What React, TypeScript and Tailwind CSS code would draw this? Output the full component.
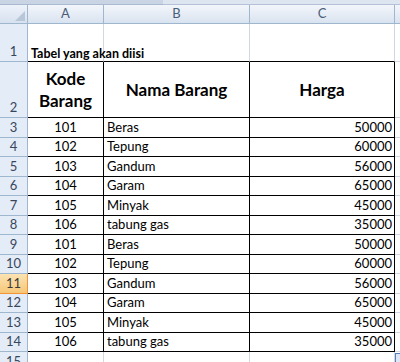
import React from "react";

const items = [
  ["101", "Beras", "50000"],
  ["102", "Tepung", "60000"],
  ["103", "Gandum", "56000"],
  ["104", "Garam", "65000"],
  ["105", "Minyak", "45000"],
  ["106", "tabung gas", "35000"],
];
const rows = [...items, ...items];

const font = { fontFamily: "Lato, 'Open Sans', sans-serif" };

function RowHead({ n, active }: { n: number; active?: boolean }) {
  return (
    <div
      className={
        "w-[28px] shrink-0 flex items-end justify-center pb-[1px] border-r border-b text-[13px] leading-none " +
        (active
          ? "bg-gradient-to-b from-[#fbe3b3] to-[#f6c777] border-r-[#f29436] border-b-[#f29436] text-[#3b3b3b]"
          : "bg-[#e4ecf7] border-r-[#9eb6ce] border-b-[#9eb6ce] text-[#37465c]")
      }
    >
      <span className="mb-[2px]">{n}</span>
    </div>
  );
}

export default function App() {
  return (
    <div className="w-[400px] h-[362px] overflow-hidden bg-white flex flex-col" style={font}>
      {/* top strip */}
      <div className="h-[5px] shrink-0 flex">
        <div className="w-[163px] bg-[#c9d5e5] border-b border-b-[#a9bad0]" />
        <div className="flex-1 bg-[#dde5f0] border-b border-b-[#b3c2d6]" />
      </div>
      {/* column header */}
      <div className="h-[19px] shrink-0 flex text-[13px] text-[#4a5c78]">
        <div className="w-[28px] shrink-0 relative bg-gradient-to-b from-[#eef3fa] to-[#d7e1ef] border-r border-b border-r-[#9eb6ce] border-b-[#9eb6ce]">
          <div className="absolute right-[2px] bottom-[2px] w-0 h-0 border-l-[10px] border-l-transparent border-b-[10px] border-b-[#b9c6d8]" />
        </div>
        <div className="w-[76px] shrink-0 flex items-center justify-center bg-gradient-to-b from-[#f3f6fb] to-[#d9e3f0] border-r border-b border-r-[#9eb6ce] border-b-[#9eb6ce]">A</div>
        <div className="w-[146px] shrink-0 flex items-center justify-center bg-gradient-to-b from-[#f3f6fb] to-[#d9e3f0] border-r border-b border-r-[#9eb6ce] border-b-[#9eb6ce]">B</div>
        <div className="w-[145px] shrink-0 flex items-center justify-center bg-gradient-to-b from-[#f3f6fb] to-[#d9e3f0] border-r border-b border-r-[#9eb6ce] border-b-[#9eb6ce]">C</div>
        <div className="flex-1 bg-gradient-to-b from-[#f3f6fb] to-[#d9e3f0] border-b border-b-[#9eb6ce]" />
      </div>
      {/* row 1 */}
      <div className="h-[38px] shrink-0 flex">
        <RowHead n={1} />
        <div className="w-[76px] shrink-0 relative border-r border-r-[#d0d7e5] border-b border-b-black">
          <span className="absolute left-[3px] bottom-[1px] whitespace-nowrap text-[12.5px] font-bold text-black leading-none">
            Tabel yang akan diisi
          </span>
        </div>
        <div className="w-[146px] shrink-0 border-r border-r-[#d0d7e5] border-b border-b-black" />
        <div className="w-[145px] shrink-0 border-r border-r-[#d0d7e5] border-b border-b-black" />
        <div className="flex-1 border-b border-b-[#d0d7e5]" />
      </div>
      {/* row 2 */}
      <div className="h-[56px] shrink-0 flex">
        <RowHead n={2} />
        <div className="w-[76px] shrink-0 flex flex-col items-center justify-center border-r border-b border-black text-[17px] font-bold leading-[22px] text-black">
          <span>Kode</span>
          <span>Barang</span>
        </div>
        <div className="w-[146px] shrink-0 flex items-center justify-center border-r border-b border-black text-[17px] font-bold text-black">
          Nama Barang
        </div>
        <div className="w-[145px] shrink-0 flex items-center justify-center border-r border-b border-black text-[17px] font-bold text-black">
          Harga
        </div>
        <div className="flex-1 border-b border-b-[#d0d7e5]" />
      </div>
      {/* data rows */}
      {rows.map(([code, name, price], i) => (
        <div key={i} className={(i % 2 === 0 ? "h-[20px]" : "h-[19px]") + " shrink-0 flex text-[13px] text-black leading-none"}>
          <RowHead n={i + 3} active={i + 3 === 11} />
          <div className="w-[76px] shrink-0 flex items-end justify-center pb-[3px] border-r border-b border-black">
            {code}
          </div>
          <div className="w-[146px] shrink-0 flex items-end justify-start pl-[3px] pb-[3px] border-r border-b border-black whitespace-nowrap">
            {name}
          </div>
          <div className="w-[145px] shrink-0 flex items-end justify-end pr-[2px] pb-[3px] border-r border-b border-black">
            {price}
          </div>
          <div className="flex-1 border-b border-b-[#d0d7e5]" />
        </div>
      ))}
      {/* row 15 */}
      <div className="flex-1 flex">
        <div className="w-[28px] shrink-0 flex justify-center pt-[3px] bg-[#e4ecf7] border-r border-r-[#9eb6ce] text-[13px] leading-none text-[#37465c]">
          15
        </div>
        <div className="w-[76px] shrink-0 border-r border-r-[#d0d7e5]" />
        <div className="w-[146px] shrink-0 border-r border-r-[#d0d7e5]" />
        <div className="w-[145px] shrink-0 border-r border-r-[#d0d7e5]" />
        <div className="flex-1 flex items-start pt-[1px]">
          <div className="w-[6px] h-[10px] bg-[#dbe6f7] border-l border-t border-[#5b7fb8]" />
        </div>
      </div>
    </div>
  );
}
